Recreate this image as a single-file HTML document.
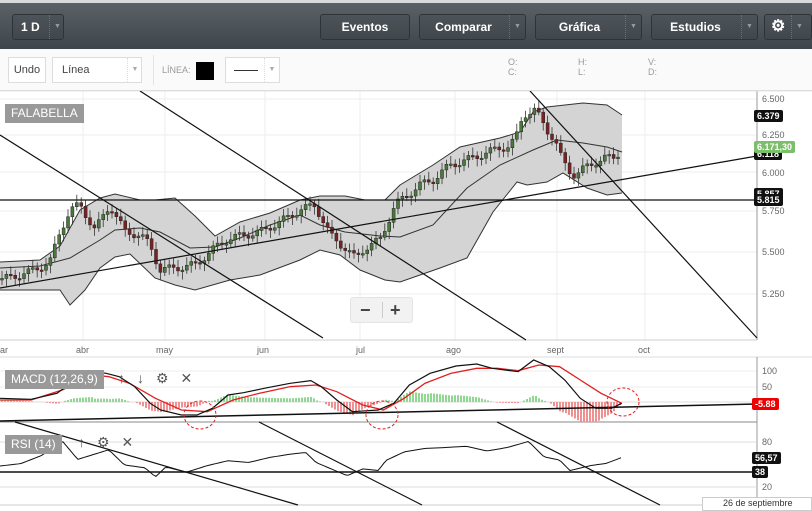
<!DOCTYPE html>
<html><head><meta charset="utf-8"><style>
*{margin:0;padding:0;box-sizing:border-box}
body{width:812px;height:511px;overflow:hidden;background:#fff;font-family:"Liberation Sans",sans-serif;position:relative}
.top{position:absolute;left:0;top:0;width:812px;height:49px;background:linear-gradient(#5a6167,#3f464b);border-top:3px solid #d8dadc}
.b{position:absolute;top:11px;height:26px;border:1px solid #2e3337;border-radius:3px;background:linear-gradient(#4d5459,#41474c);color:#fff;font-weight:bold;font-size:12px;line-height:24px;text-align:center}
.b i{position:absolute;top:0;bottom:0;border-left:1px dotted #6a7075;width:16px;font-style:normal;font-size:7px;color:#999;line-height:24px;text-align:center}
.tb{position:absolute;top:49px;left:0;width:812px;height:42px;background:#fafafa;border-bottom:1px solid #ddd}
.w{position:absolute;top:8px;height:26px;border:1px solid #ddd;background:#fff;font-size:11px;color:#444;line-height:24px}
.s{font-size:9px;color:#999;position:absolute}
.lbl{position:absolute;background:#999;color:#fff;font-size:12px;line-height:19px;padding:0 6px}
.ax{position:absolute;font-size:9px;color:#666}
.tag{position:absolute;height:12px;font-size:9px;font-weight:bold;color:#fff;background:#111;line-height:12px;padding:0 3px;border-radius:2px}
</style></head><body>
<div class="top">
<div class="b" style="left:12px;width:52px;text-align:left;padding-left:8px">1 D<i style="left:36px">▼</i></div>
<div class="b" style="left:320px;width:90px">Eventos</div>
<div class="b" style="left:419px;width:107px;padding-right:18px">Comparar<i style="left:89px">▼</i></div>
<div class="b" style="left:535px;width:107px;padding-right:18px">Gráfica<i style="left:89px">▼</i></div>
<div class="b" style="left:651px;width:107px;padding-right:18px">Estudios<i style="left:89px">▼</i></div>
<div class="b" style="left:764px;width:48px;text-align:left;padding-left:6px;font-size:16px">⚙<i style="left:26px">▼</i></div>
</div>
<div class="tb">
<div class="w" style="left:8px;width:38px;text-align:center">Undo</div>
<div class="w" style="left:52px;width:90px;padding-left:9px">Línea<span style="position:absolute;left:74px;top:0;border-left:1px dotted #ddd;width:15px;text-align:center;font-size:7px;color:#aaa">▼</span></div>
<div style="position:absolute;left:153px;top:6px;height:30px;border-left:1px solid #e4e4e4"></div>
<div class="s" style="left:162px;top:16px">LÍNEA:</div>
<div style="position:absolute;left:196px;top:13px;width:18px;height:18px;background:#000"></div>
<div class="w" style="left:225px;width:55px"><span style="position:absolute;left:8px;top:12px;width:24px;border-top:1px solid #333"></span><span style="position:absolute;left:38px;top:0;border-left:1px dotted #ddd;width:15px;text-align:center;font-size:7px;color:#aaa">▼</span></div>
<div class="s" style="left:508px;top:8px">O:<br>C:</div>
<div class="s" style="left:578px;top:8px">H:<br>L:</div>
<div class="s" style="left:648px;top:8px">V:<br>D:</div>
</div>
<svg id="g" width="812" height="420" style="position:absolute;left:0;top:91px" viewBox="0 91 812 420"></svg>
<div class="lbl" style="left:5px;top:104px">FALABELLA</div>
<div class="lbl" style="left:5px;top:370px">MACD (12,26,9)</div>
<div class="lbl" style="left:5px;top:435px">RSI (14)</div>
<div style="position:absolute;left:118px;top:370px;font-size:14px;color:#555;letter-spacing:12px">↑↓⚙✕</div>
<div style="position:absolute;left:78px;top:434px;font-size:14px;color:#555;letter-spacing:12px">↑⚙✕</div>
<div style="position:absolute;left:350px;top:297px;width:63px;height:26px;background:#f2f2f2;border:1px solid #e4e4e4;border-radius:3px;font-size:18px;font-weight:bold;color:#444;line-height:24px"><span style="position:absolute;left:9px">−</span><span style="position:absolute;left:31px;top:4px;height:16px;border-left:1px solid #ccc"></span><span style="position:absolute;left:39px">+</span></div>
<div class="ax" style="left:762px;top:94px">6.500</div>
<div class="ax" style="left:762px;top:130px">6.250</div>
<div class="ax" style="left:762px;top:168px">6.000</div>
<div class="ax" style="left:762px;top:206px">5.750</div>
<div class="ax" style="left:762px;top:247px">5.500</div>
<div class="ax" style="left:762px;top:289px">5.250</div>
<div class="ax" style="left:762px;top:366px">100</div>
<div class="ax" style="left:762px;top:382px">50</div>
<div class="ax" style="left:762px;top:437px">80</div>
<div class="ax" style="left:762px;top:482px">20</div>
<div class="tag" style="left:754px;top:110px">6.379</div>
<div class="tag" style="left:754px;top:148px">6.118</div>
<div class="tag" style="left:754px;top:141px;background:#7cbf6a">6.171,30</div>
<div class="tag" style="left:754px;top:188px">5.857</div>
<div class="tag" style="left:754px;top:194px">5.815</div>
<div class="tag" style="left:752px;top:398px;background:#e00">-5.88</div>
<div class="tag" style="left:752px;top:452px">56,57</div>
<div class="tag" style="left:752px;top:466px">38</div>
<div class="ax" style="left:0;top:345px">ar</div><div class="ax" style="left:76px;top:345px">abr</div><div class="ax" style="left:156px;top:345px">may</div><div class="ax" style="left:257px;top:345px">jun</div><div class="ax" style="left:356px;top:345px">jul</div><div class="ax" style="left:446px;top:345px">ago</div><div class="ax" style="left:547px;top:345px">sept</div><div class="ax" style="left:638px;top:345px">oct</div>
<div style="position:absolute;left:702px;top:497px;width:110px;height:14px;border:1px solid #ccc;background:#fff;font-size:9px;color:#333;padding-left:20px">26 de septiembre</div>
<script>
(function(){
var g=document.getElementById('g'),h='';
function P(a){return a.map(function(p){return p[0]+','+p[1]}).join(' ')}
function L(x1,y1,x2,y2,c,w){h+='<line x1="'+x1+'" y1="'+y1+'" x2="'+x2+'" y2="'+y2+'" stroke="'+(c||'#111')+'" stroke-width="'+(w||1.2)+'"/>'}
function interp(a,x){for(var i=1;i<a.length;i++){if(x<=a[i][0]){var t=(x-a[i-1][0])/(a[i][0]-a[i-1][0]);return a[i-1][1]+t*(a[i][1]-a[i-1][1])}}return a[a.length-1][1]}
[99,135,172,211,252,294].forEach(function(y){L(0,y,757,y,'#eee',1)});
[83,165,265,360,455,557,645].forEach(function(x){L(x,91,x,340,'#eee',1)});
L(757,91,757,340,'#999',1);L(0,91,812,91,'#e4e4e4',1);L(0,340,757,340,'#ccc',1);
var up=[[0,262],[40,260],[60,246],[80,210],[100,198],[115,194],[140,200],[155,200],[175,198],[195,216],[215,236],[240,222],[270,213],[300,200],[320,196],[345,196],[365,200],[385,200],[400,185],[433,165],[460,147],[500,138],[520,132],[533,112],[547,107],[583,103],[607,105],[622,115]];
var lo=[[0,290],[40,290],[60,290],[70,305],[85,290],[100,268],[115,257],[130,254],[155,278],[175,285],[195,290],[230,280],[260,275],[300,260],[320,250],[340,255],[360,270],[385,280],[400,282],[440,268],[467,258],[493,212],[517,182],[527,185],[547,182],[563,173],[587,188],[607,195],[622,193]];
var mid=[[0,268],[40,266],[70,258],[100,240],[115,230],[140,228],[160,232],[190,248],[215,247],[240,238],[270,225],[300,215],[320,225],[345,232],[380,236],[400,237],[433,225],[467,188],[500,165],[533,150],[557,140],[583,143],[607,147],[622,152]];
h+='<polygon points="'+P(up.concat(lo.slice().reverse()))+'" fill="#d4d4d4" stroke="none"/>';
h+='<polyline points="'+P(up)+'" fill="none" stroke="#333" stroke-width="1"/><polyline points="'+P(lo)+'" fill="none" stroke="#333" stroke-width="1"/><polyline points="'+P(mid)+'" fill="none" stroke="#333" stroke-width="1"/>';
var cl=[[0,280],[30,272],[50,262],[60,232],[70,210],[80,205],[95,230],[110,205],[125,232],[140,235],[150,245],[160,270],[175,268],[195,265],[210,252],[225,240],[240,236],[260,232],[280,222],[300,210],[315,205],[330,235],[345,248],[355,258],[365,248],[380,240],[395,205],[420,185],[433,180],[450,165],[467,160],[480,155],[500,148],[510,146],[517,135],[523,115],[535,110],[540,118],[547,130],[555,140],[560,155],[568,170],[575,175],[585,168],[595,162],[605,158],[615,158],[622,147]];
var prev=interp(cl,0);
for(var x=2;x<=622;x+=4.4){var c=interp(cl,x)+Math.sin(x*1.7)*4,o=prev;var tp=Math.min(o,c),bt=Math.max(o,c);if(bt-tp<1.5)bt=tp+1.5;var col=c<o?'#4a7a3a':'#7a2222';h+='<line x1="'+x+'" y1="'+(tp-3-Math.abs(Math.sin(x))*5)+'" x2="'+x+'" y2="'+(bt+3+Math.abs(Math.cos(x))*5)+'" stroke="#333" stroke-width="0.8"/><rect x="'+(x-1.5)+'" y="'+tp+'" width="3" height="'+(bt-tp)+'" fill="'+col+'" stroke="#222" stroke-width="0.5"/>';prev=c}
L(0,135,323,338);L(140,91,526,340);L(530,91,757,338);L(0,288,757,156);L(0,200,757,200,'#111',1.3);
function Z(a){return a.map(function(p){return [p[0]/1.93,p[1]/3+340]})}
L(0,357,812,357,'#ddd',1);L(0,371,757,371,'#eee',1);L(0,387,757,387,'#eee',1);L(0,402,757,402,'#ddd',1);L(0,422,757,422,'#888',1);L(757,357,757,505,'#999',1);
var mb=Z([[0,175],[60,178],[110,160],[140,125],[175,95],[205,100],[230,110],[260,140],[290,190],[310,210],[350,225],[380,225],[410,205],[440,165],[470,158],[510,145],[560,130],[600,122],[620,140],[650,180],[680,215],[730,210],[760,190],[790,135],[830,100],[880,78],[920,72],[950,85],[1000,95],[1030,60],[1060,80],[1090,120],[1120,175],[1150,205],[1180,205],[1200,190]]);
var mr=Z([[0,180],[60,180],[120,150],[180,105],[210,110],[250,130],[300,175],[350,210],[400,215],[450,180],[500,160],[560,140],[610,135],[650,155],[700,195],[740,210],[780,175],[820,130],[870,100],[920,85],[960,85],[1000,92],[1040,75],[1080,80],[1120,120],[1160,160],[1200,190]]);
for(var x=1;x<620;x+=3){var d=(interp(mr,x)-interp(mb,x))*1.1;if(Math.abs(d)<0.5)continue;var y0=402;h+='<rect x="'+x+'" y="'+(d>0?y0-d:y0)+'" width="2" height="'+Math.abs(d)+'" fill="'+(d>0?'#8fd88f':'#f09090')+'"/>'}
h+='<polyline points="'+P(mr)+'" fill="none" stroke="#e02020" stroke-width="1.3"/><polyline points="'+P(mb)+'" fill="none" stroke="#111" stroke-width="1.2"/>';
L(0,421,757,404,'#111',1.5);
[[200,415],[382,415],[623,402]].forEach(function(p){h+='<ellipse cx="'+p[0]+'" cy="'+p[1]+'" rx="16" ry="14" fill="none" stroke="#e02020" stroke-dasharray="3,2"/>'});
L(0,442,757,442,'#ddd',1);L(0,487,757,487,'#ddd',1);L(0,472,757,472,'#111',1.4);L(0,505,812,505,'#ccc',1);
var rs=Z([[0,378],[40,370],[80,345],[120,300],[150,355],[180,340],[210,325],[240,370],[280,378],[300,405],[320,375],[360,390],[400,370],[440,355],[480,360],[520,345],[560,335],[590,330],[610,360],[640,380],[670,400],[700,380],[730,385],[745,355],[780,330],[820,320],[860,318],[900,315],[940,330],[980,320],[1020,303],[1050,350],[1080,360],[1100,392],[1140,378],[1170,372],[1200,355]]);
var rz=[];for(var x=0;x<=622;x+=3)rz.push([x,interp(rs,x)+Math.sin(x*2.1)*2.5]);
h+='<polyline points="'+P(rz)+'" fill="none" stroke="#111" stroke-width="1"/>';
L(15,422,298,505);L(259,422,422,505);L(497,422,660,505);
g.innerHTML=h;
})();
</script>
</body></html>
